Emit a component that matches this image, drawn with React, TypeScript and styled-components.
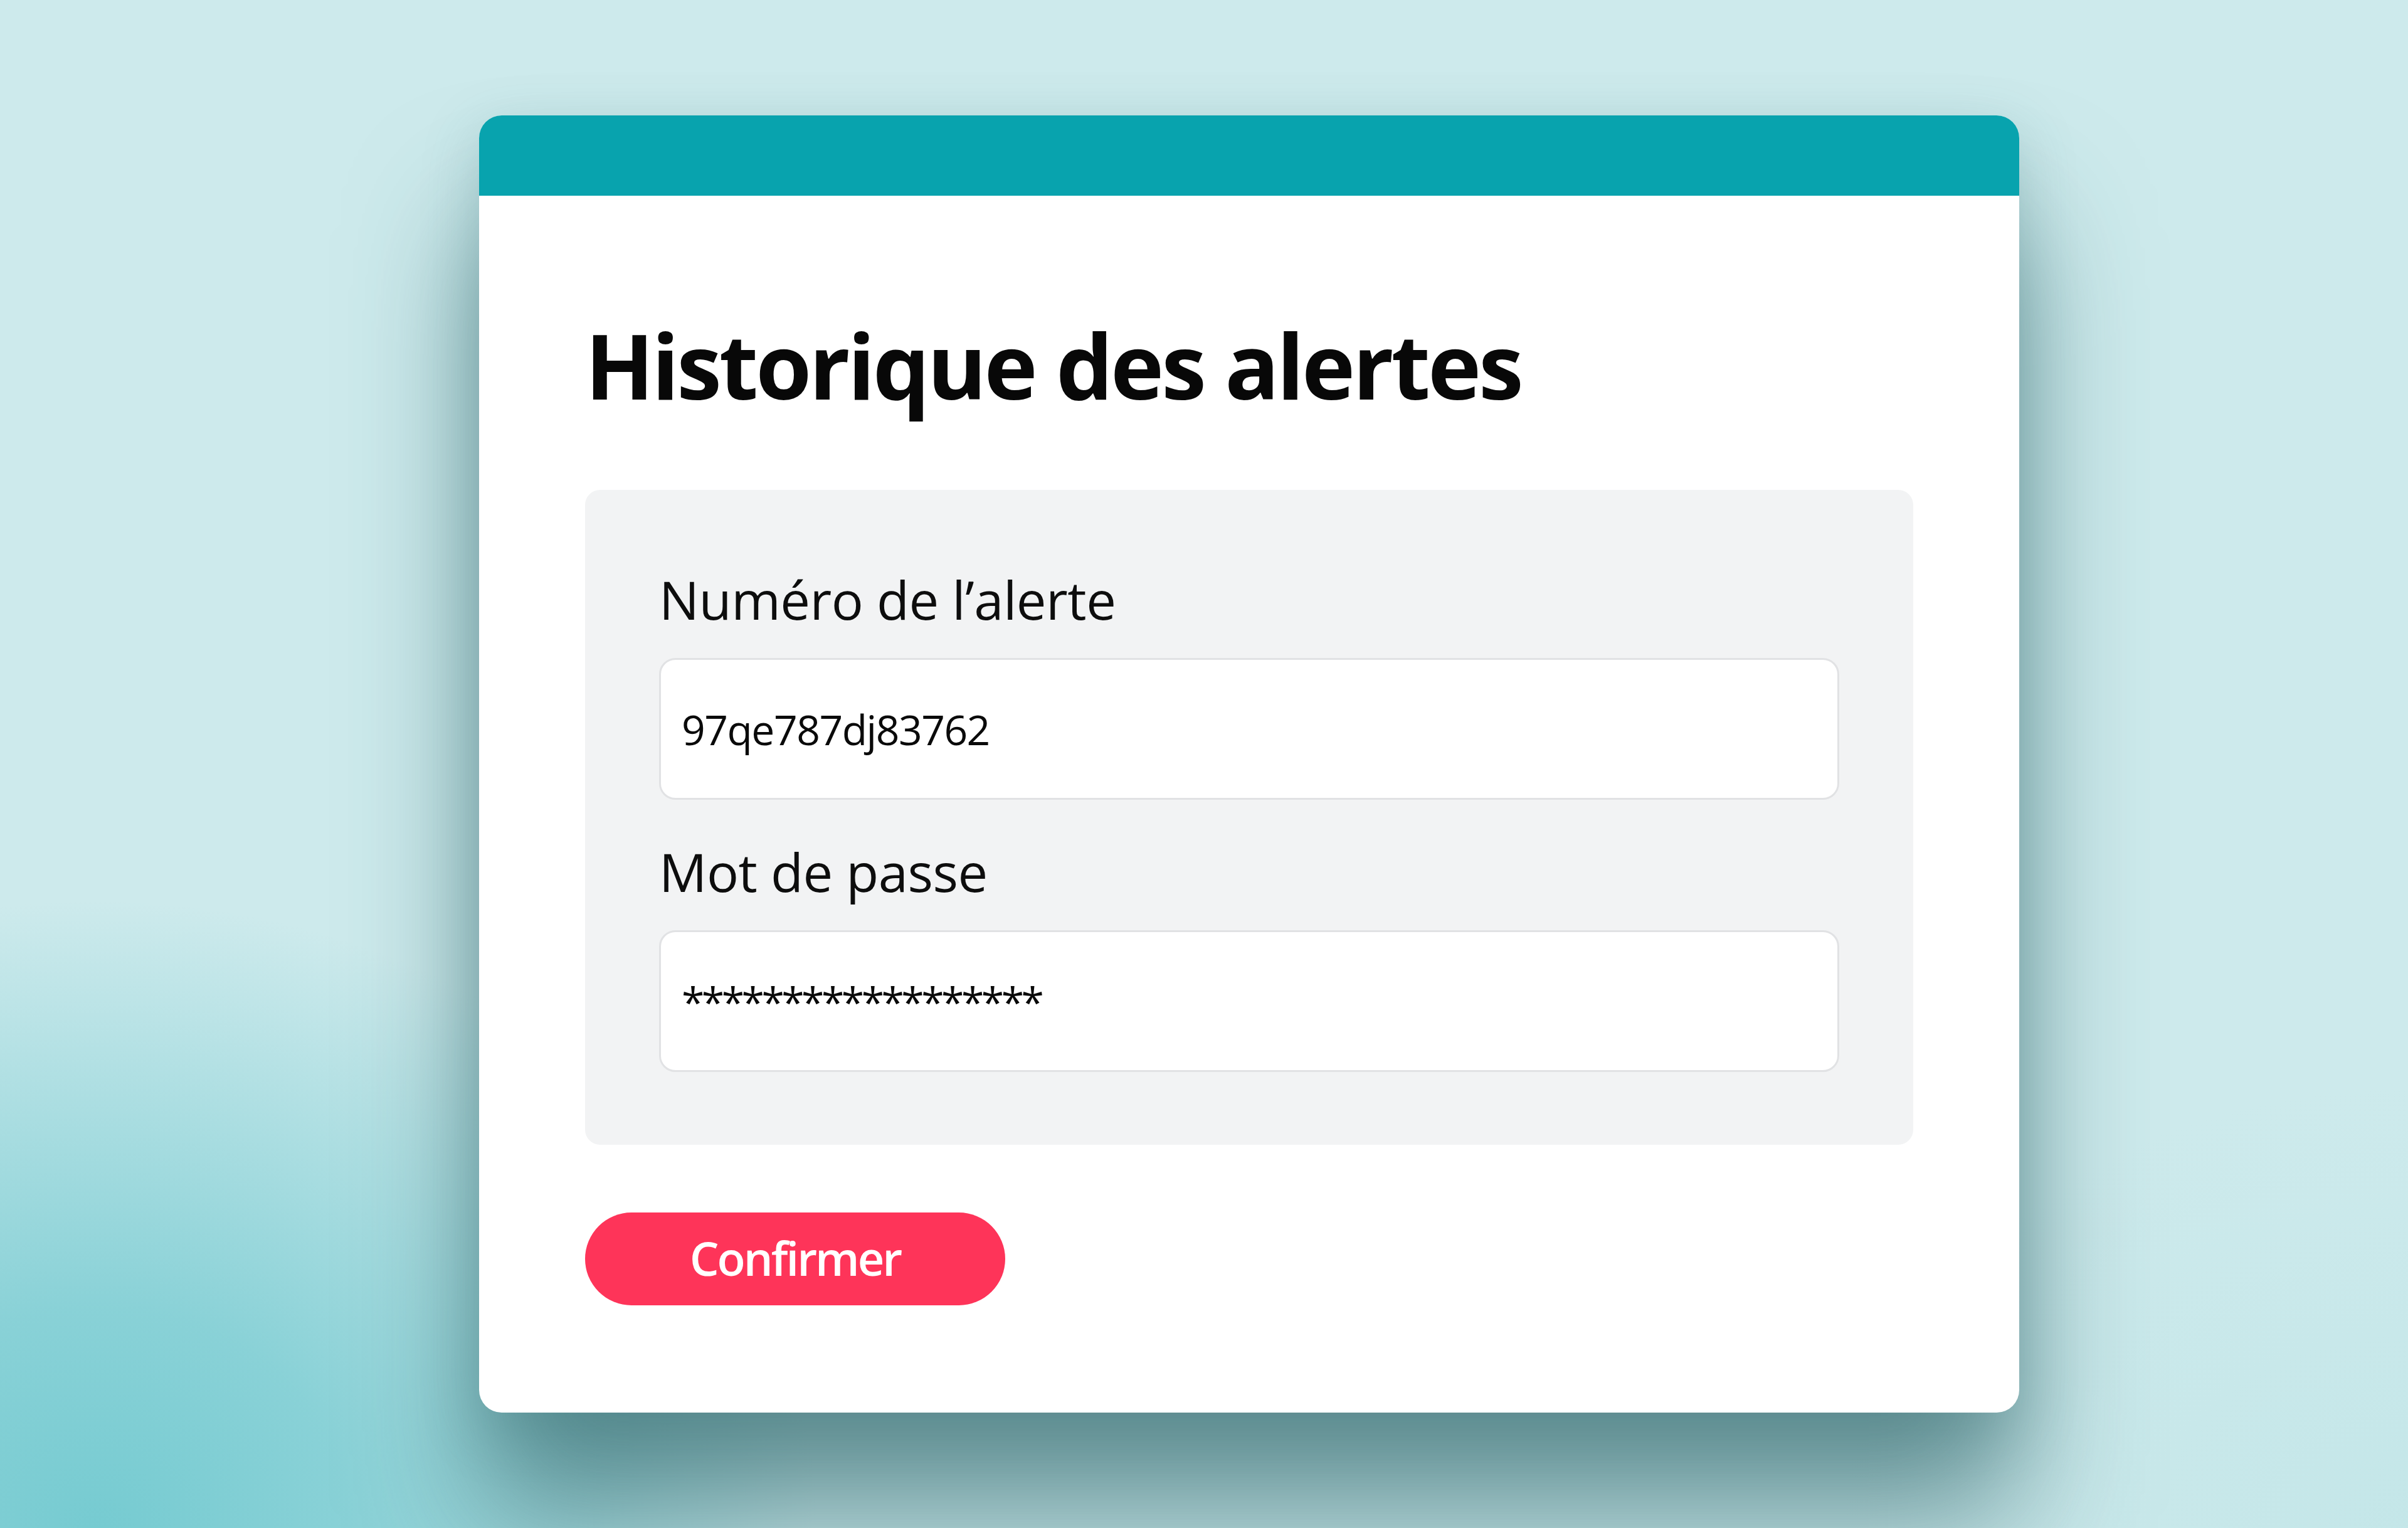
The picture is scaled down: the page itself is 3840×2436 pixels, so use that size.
import React from "react";
import styled, { createGlobalStyle } from "styled-components";

const GlobalStyle = createGlobalStyle`
  html, body {
    margin: 0;
    padding: 0;
  }
  body {
    font-family: "Open Sans", "Noto Sans", sans-serif;
    color: #0b0b0b;
  }
  * { box-sizing: border-box; }
`;

const Page = styled.div`
  width: 3840px;
  height: 2436px;
  overflow: hidden;
  display: flex;
  align-items: flex-start;
  padding: 184px 0 0 764px;
  background:
    radial-gradient(ellipse 1150px 1000px at 4% 100%, rgba(118, 203, 209, 1) 0%, rgba(125, 205, 211, 0.85) 35%, rgba(205, 234, 236, 0) 100%),
    radial-gradient(ellipse 900px 700px at 100% 100%, rgba(190, 228, 230, 0.6) 0%, rgba(205, 234, 236, 0) 100%),
    #cdeaec;
`;

const Card = styled.section`
  width: 2456px;
  height: 2068px;
  background: #ffffff;
  border-radius: 36px;
  overflow: hidden;
  display: flex;
  flex-direction: column;
  box-shadow:
    0 170px 200px 0 rgba(40, 95, 100, 0.62),
    0 30px 90px rgba(60, 120, 125, 0.25);
`;

const HeaderBar = styled.div`
  height: 128px;
  flex: none;
  background: #08a3ae;
`;

const Body = styled.div`
  display: flex;
  flex-direction: column;
  align-items: flex-start;
  padding: 196px 169px 169px;
`;

const Title = styled.h1`
  margin: 0;
  font-size: 144px;
  line-height: 146px;
  font-weight: 700;
  letter-spacing: -4px;
  color: #080808;
`;

const FormPanel = styled.div`
  align-self: stretch;
  margin-top: 127px;
  background: #f2f3f4;
  border-radius: 24px;
  padding: 132px 118px 116px;
  display: flex;
  flex-direction: column;
  gap: 72px;
`;

const Field = styled.label`
  display: flex;
  flex-direction: column;
  gap: 51px;
`;

const FieldLabel = styled.span`
  font-size: 85px;
  line-height: 85px;
  font-weight: 400;
  letter-spacing: -0.5px;
  color: #0d0d0d;
`;

const TextInput = styled.input<{ $tracking: number }>`
  width: 100%;
  height: 226px;
  border: 3px solid #e1e2e4;
  border-radius: 26px;
  background: #ffffff;
  padding: 0 33px;
  font-family: "Open Sans", "Noto Sans", sans-serif;
  font-size: 66px;
  letter-spacing: ${(p) => p.$tracking}px;
  color: #0a0a0a;
  outline: none;
`;

const ConfirmButton = styled.button`
  margin-top: 108px;
  width: 670px;
  height: 148px;
  border: none;
  border-radius: 74px;
  background: #fe3459;
  color: #ffffff;
  font-family: "Open Sans", "Noto Sans", sans-serif;
  font-size: 74px;
  font-weight: 600;
  letter-spacing: -3px;
  display: flex;
  align-items: center;
  justify-content: center;
  padding: 0 0 4px;
  cursor: pointer;
`;

export default function App() {
  return (
    <>
      <GlobalStyle />
      <Page>
        <Card>
          <HeaderBar />
          <Body>
            <Title>Historique des alertes</Title>
            <FormPanel>
              <Field>
                <FieldLabel>Numéro de l’alerte</FieldLabel>
                <TextInput type="text" readOnly value="97qe787dj83762" $tracking={-1.5} />
              </Field>
              <Field>
                <FieldLabel>Mot de passe</FieldLabel>
                <TextInput type="text" readOnly value="******************" $tracking={-4.5} />
              </Field>
            </FormPanel>
            <ConfirmButton type="button">Confirmer</ConfirmButton>
          </Body>
        </Card>
      </Page>
    </>
  );
}
